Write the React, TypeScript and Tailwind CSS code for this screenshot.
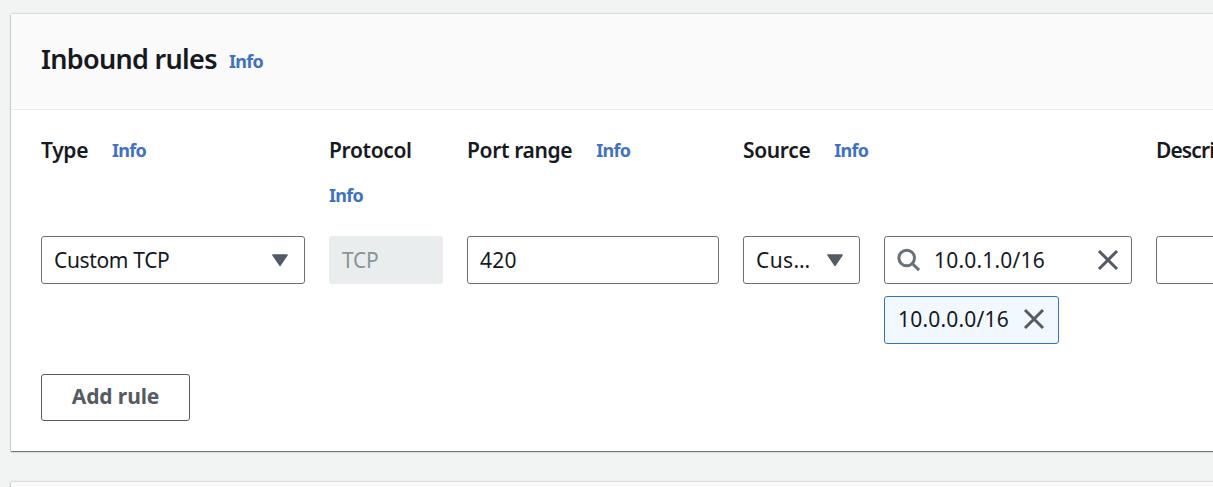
import type { ReactNode } from 'react';

function InfoLink({ className = '' }: { className?: string }) {
  return (
    <a href="#" className={`text-[18px] leading-[28px] font-bold tracking-[-0.75px] text-[#3f72c0] ${className}`}>
      Info
    </a>
  );
}

function Label({ children, className = 'tracking-[-0.35px]' }: { children: ReactNode; className?: string }) {
  return (
    <span className={`text-[21px] leading-[30px] font-semibold whitespace-nowrap ${className}`}>
      {children}
    </span>
  );
}

function LabelRow({ children }: { children: ReactNode }) {
  return (
    <div className="flex items-start gap-6">
      <Label>{children}</Label>
      <InfoLink className="pt-[1px]" />
    </div>
  );
}

function Caret() {
  return (
    <svg width="18" height="14" viewBox="0 0 18 14" className="shrink-0" aria-hidden="true">
      <path d="M2 2h14L9 12.3z" fill="#545b64" stroke="#545b64" strokeWidth="1.6" strokeLinejoin="round" />
    </svg>
  );
}

function Cross() {
  return (
    <svg width="22" height="22" viewBox="0 0 22 22" className="shrink-0" aria-hidden="true">
      <path d="M2 2l18 18M20 2L2 20" fill="none" stroke="#545b64" strokeWidth="3" />
    </svg>
  );
}

function Magnifier() {
  return (
    <svg width="24" height="24" viewBox="0 0 24 24" className="shrink-0" aria-hidden="true">
      <circle cx="9.7" cy="10" r="7.8" fill="none" stroke="#687078" strokeWidth="3" />
      <path d="M15.2 15.5l6.9 6.6" fill="none" stroke="#687078" strokeWidth="3" />
    </svg>
  );
}

const field = 'flex h-12 items-center rounded-[3px] border border-[#687078] bg-white text-[21px] leading-[30px]';

export default function App() {
  return (
    <div className="h-[487px] w-[1213px] overflow-hidden bg-[#f2f3f3] pt-[14px] pl-[11px] font-['Noto_Sans',sans-serif] text-[#16191f]">
      <section className="h-[437px] w-[1240px] bg-white shadow-[0_1px_1px_0_rgba(0,28,36,0.5),0_0_2px_0_rgba(0,28,36,0.3)]">
        <header className="flex h-24 items-start border-b border-[#eaeded] bg-[#fafafa] pt-[26px] pl-[30px]">
          <h2 className="w-[188px] text-[27px] leading-[38px] font-semibold tracking-[-0.7px] whitespace-nowrap">
            Inbound rules
          </h2>
          <InfoLink className="pt-[7px]" />
        </header>
        <div className="grid grid-cols-[264px_114px_252px_389px_264px] gap-x-6 pt-[25px] pl-[30px]">
          <LabelRow>Type</LabelRow>
          <div className="flex h-[101px] flex-col gap-4">
            <Label>Protocol</Label>
            <InfoLink />
          </div>
          <LabelRow>Port range</LabelRow>
          <LabelRow>Source</LabelRow>
          <Label className="tracking-[-0.9px]">Description - optional</Label>

          <div className={`${field} justify-between pr-[15px] pl-3`}>
            <span className="tracking-[-0.35px]">Custom TCP</span>
            <Caret />
          </div>
          <div className="flex h-12 items-center rounded-[3px] bg-[#eaeded] pl-[13px] text-[21px] leading-[30px] tracking-[-0.3px] text-[#879596]">
            TCP
          </div>
          <div className={`${field} pl-3 tracking-[0.2px]`}>420</div>
          <div className="flex gap-6">
            <div className={`${field} w-[117px] justify-between pr-[15px] pl-3 tracking-[0.4px]`}>
              <span>Cus…</span>
              <Caret />
            </div>
            <div className="flex w-[248px] flex-col items-start gap-3">
              <div className={`${field} w-full pr-[12px] pl-[12px]`}>
                <Magnifier />
                <span className="grow pl-[13px] tracking-[0.2px]">10.0.1.0/16</span>
                <Cross />
              </div>
              <div className="flex h-12 w-[175px] items-center justify-between rounded-[3px] border border-[#3572c0] bg-[#f1f8ff] pr-[13px] pb-[2px] pl-[13px] text-[21px] leading-[30px]">
                <span className="tracking-[0.2px]">10.0.0.0/16</span>
                <Cross />
              </div>
            </div>
          </div>
          <div className={field} />
        </div>
        <button className="mt-[30px] ml-[30px] h-[47px] w-[149px] rounded-[3px] border border-[#545b64] bg-white pb-[2px] text-[21px] font-bold tracking-[-0.1px] text-[#545b64]">
          Add rule
        </button>
      </section>
      <section className="mt-[31px] h-24 w-[1240px] bg-[#fafafa] shadow-[0_1px_1px_0_rgba(0,28,36,0.5),0_0_2px_0_rgba(0,28,36,0.3)]" />
    </div>
  );
}
